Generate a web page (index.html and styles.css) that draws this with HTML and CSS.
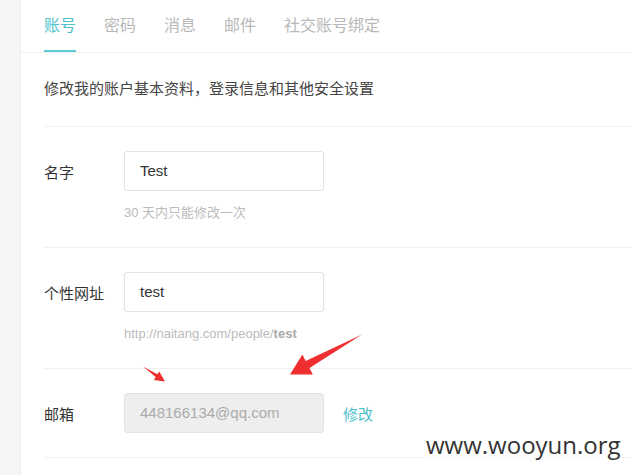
FILE: index.html
```html
<!DOCTYPE html>
<html lang="zh-CN">
<head>
<meta charset="utf-8">
<title>账号设置</title>
<link rel="stylesheet" href="styles.css">
</head>
<body>
<div class="page">
  <div class="sidebar"></div>
  <div class="main">
    <nav class="tabs">
      <span class="tab active">账号</span>
      <span class="tab">密码</span>
      <span class="tab">消息</span>
      <span class="tab">邮件</span>
      <span class="tab">社交账号绑定</span>
    </nav>
    <div class="content">
      <p class="desc">修改我的账户基本资料，登录信息和其他安全设置</p>
      <div class="row">
        <div class="line">
          <label class="label">名字</label>
          <div class="input">Test</div>
        </div>
        <div class="hint">30 天内只能修改一次</div>
      </div>
      <div class="row">
        <div class="line">
          <label class="label">个性网址</label>
          <div class="input">test</div>
        </div>
        <div class="hint">http://naitang.com/people/<b>test</b></div>
      </div>
      <div class="row last">
        <div class="line">
          <label class="label">邮箱</label>
          <div class="input disabled">448166134@qq.com</div>
          <a class="edit">修改</a>
        </div>
      </div>
    </div>
  </div>
  <svg class="arrows" width="631" height="475" viewBox="0 0 631 475">
    <polygon fill="#ef2f2f" points="362,334.5 309.5,368 312.8,374.5 290,374.5 302.4,354.5 305.7,361"/>
    <polygon fill="#ef2f2f" points="143,366.5 155.7,377 153.8,380 165,381.5 159.2,371.4 157.3,374.3"/>
  </svg>
  <div class="watermark">www.wooyun.org</div>
</div>
</body>
</html>
```
FILE: styles.css
```css
html, body {
  margin: 0;
  padding: 0;
  background: #fff;
}
.page {
  position: relative;
  display: flex;
  width: 631px;
  height: 475px;
  overflow: hidden;
  font-family: "Liberation Sans", "Noto Sans CJK SC", sans-serif;
}
.sidebar {
  width: 20px;
  flex: none;
  background: #f4f6f6;
  border-right: 1px solid #eef0f0;
}
.main {
  flex: 1;
  background: #fff;
}
.tabs {
  display: flex;
  gap: 28px;
  height: 53px;
  padding-left: 23px;
  border-bottom: 1px solid #f0f0f0;
  box-sizing: border-box;
}
.tab {
  font-size: 16px;
  color: #b8b8b8;
  padding-top: 2px;
  line-height: 48px;
  border-bottom: 2px solid transparent;
}
.tab.active {
  color: #4ec3cc;
  border-bottom-color: #5ccdd4;
}
.content {
  padding-left: 23px;
}
.desc {
  margin: 0;
  padding: 25px 0 27px;
  font-size: 15px;
  line-height: 21px;
  color: #444;
  border-bottom: 1px solid #f0f0f0;
}
.row {
  padding: 24px 0 25px;
  border-bottom: 1px solid #f0f0f0;
}
.row.last {
  padding-bottom: 24px;
}
.line {
  display: flex;
  align-items: center;
}
.label {
  width: 80px;
  font-size: 15px;
  color: #333;
}
.input {
  width: 200px;
  height: 40px;
  box-sizing: border-box;
  border: 1px solid #e2e2e2;
  border-radius: 3px;
  padding-left: 15px;
  font-size: 15px;
  line-height: 38px;
  color: #333;
}
.input.disabled {
  background: #eee;
  color: #aaa;
}
.edit {
  margin-left: 19px;
  font-size: 15px;
  color: #4ec3cc;
}
.hint {
  margin: 12px 0 0 80px;
  font-size: 13px;
  line-height: 19px;
  color: #bbb;
}
.hint b {
  color: #aaa;
}
.arrows {
  position: absolute;
  left: 0;
  top: 0;
  pointer-events: none;
}
.watermark {
  position: absolute;
  left: 426px;
  top: 430px;
  font-family: "Open Sans", sans-serif;
  font-size: 24px;
  line-height: 30px;
  color: #333;
  background: rgba(255,255,255,0.6);
}
```
